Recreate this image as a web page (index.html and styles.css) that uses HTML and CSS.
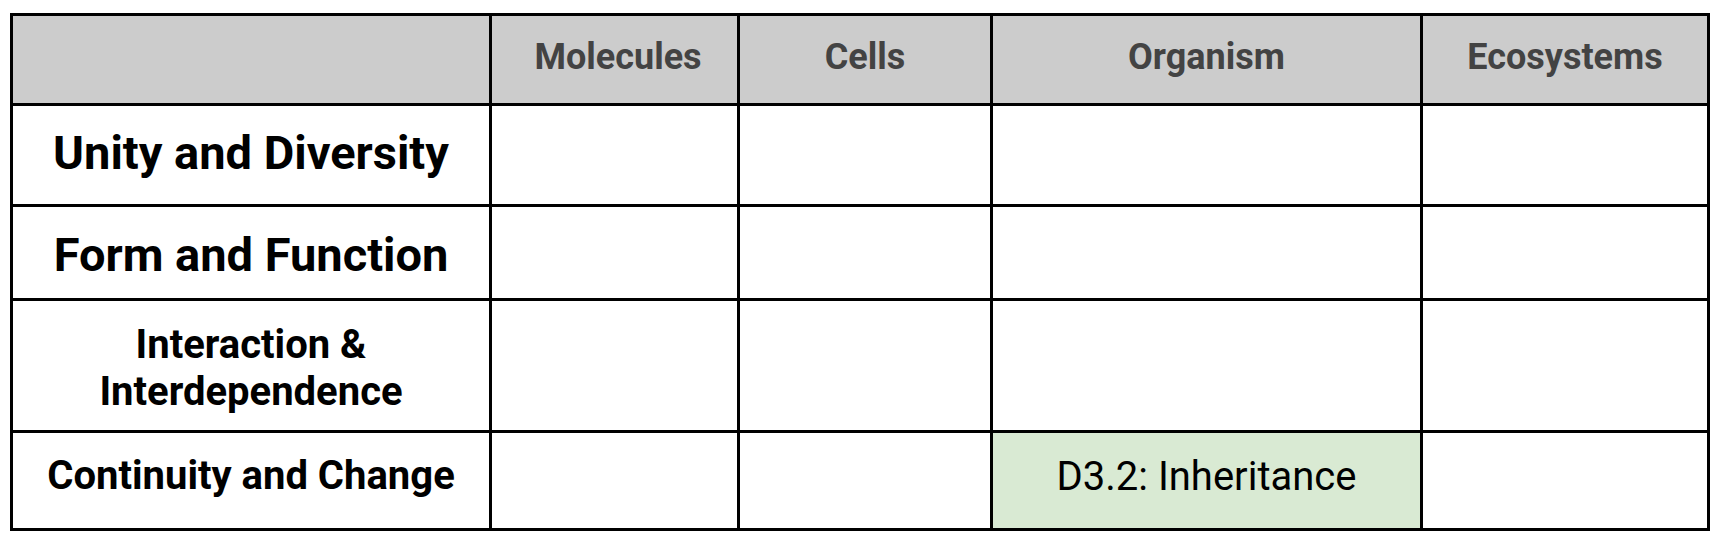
FILE: index.html
```html
<!DOCTYPE html>
<html>
<head>
<meta charset="utf-8">
<link rel="stylesheet" href="styles.css">
</head>
<body>
<div class="grid">
  <div class="cell head"></div>
  <div class="cell head shift">Molecules</div>
  <div class="cell head">Cells</div>
  <div class="cell head">Organism</div>
  <div class="cell head">Ecosystems</div>

  <div class="cell label big r1">Unity and Diversity</div>
  <div class="cell"></div><div class="cell"></div><div class="cell"></div><div class="cell"></div>

  <div class="cell label big r2">Form and Function</div>
  <div class="cell"></div><div class="cell"></div><div class="cell"></div><div class="cell"></div>

  <div class="cell label mid r3">Interaction &amp;<br>Interdependence</div>
  <div class="cell"></div><div class="cell"></div><div class="cell"></div><div class="cell"></div>

  <div class="cell label mid r4">Continuity and Change</div>
  <div class="cell"></div><div class="cell"></div><div class="cell green r4">D3.2: Inheritance</div><div class="cell"></div>
</div>
</body>
</html>
```
FILE: styles.css
```css
html, body {
  margin: 0;
  padding: 0;
  background: #ffffff;
}
body {
  font-family: Roboto, "Liberation Sans", sans-serif;
}
.grid {
  margin: 13px 0 0 10px;
  width: 1700px;
  display: grid;
  grid-template-columns: 476px 245px 250px 427px 284px;
  grid-template-rows: 87px 98px 91px 129px 95px;
  gap: 3px;
  padding: 3px;
  box-sizing: border-box;
  background: #000000;
}
.cell {
  background: #ffffff;
  display: flex;
  align-items: center;
  justify-content: center;
  text-align: center;
  color: #000000;
  box-sizing: border-box;
}
.head {
  background: #cccccc;
  color: #434343;
  font-weight: 700;
  font-size: 36px;
  padding-bottom: 6px;
}
.shift {
  padding-left: 7px;
}
.label {
  font-weight: 700;
  line-height: 1.18;
}
.big {
  font-size: 47px;
}
.mid {
  font-size: 40px;
}
.r1 {
  padding-bottom: 4px;
}
.r2 {
  padding-top: 4px;
}
.r3 {
  padding-top: 5px;
}
.r4 {
  padding-bottom: 9px;
}
.green {
  background: #d9ead3;
  font-size: 40px;
  font-weight: 400;
}
```
